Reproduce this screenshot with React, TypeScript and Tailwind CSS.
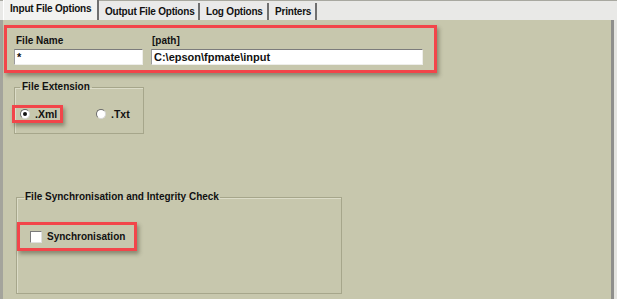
const font = { fontFamily: '"Liberation Sans", Arial, sans-serif' };

const tabs = [
    { name: 'Input File Options', w: 'w-[96px]', active: true },
    { name: 'Output File Options', w: 'w-[101px]', active: false },
    { name: 'Log Options', w: 'w-[69px]', active: false },
    { name: 'Printers', w: 'w-[48px]', active: false },
];

const RedBox = ({ className, children }: { className: string; children: React.ReactNode }) => (
    <div className={`border-[3px] border-[#f2454a] shadow-[2px_3px_4px_rgba(60,60,40,0.45)] ${className}`}>
        {children}
    </div>
);

const App = () => {
    return (
        <div style={font} className="w-[617px] h-[299px] bg-[#e9e9e7] flex flex-col overflow-hidden text-[10px] font-bold text-[#111] leading-[12px]">
            {/* tab strip */}
            <div className="h-[20px] border-t border-[#a8a8a0] flex items-end pl-[3px] bg-[#e9e9e7]">
                {tabs.map((tab) => (
                    <div
                        key={tab.name}
                        className={`${tab.w} flex items-center pl-[6px] border-r-2 border-r-[#6f6f6f] ${tab.active ? 'h-[20px] bg-[#f2f2f0] border-l border-l-white pb-[2px]' : 'h-[17px] bg-[#eaeaea]'}`}
                    >
                        <span className="whitespace-nowrap tracking-[-0.2px]">{tab.name}</span>
                    </div>
                ))}
            </div>

            {/* panel */}
            <div className="flex-1 flex">
                <div className="w-[3px] bg-[#a4a49c]" />
                <div className="flex-1 bg-[#c7c7ad] flex flex-col">
                    <RedBox className="mt-[5px] ml-[1px] w-[433px] h-[48px] pt-[7px] pl-[7px] flex gap-[8px]">
                        <div className="flex flex-col w-[129px]">
                            <span className="pl-[2px] h-[14px]">File Name</span>
                            <div className="h-[16px] bg-white border border-t-[#7c7c7c] border-l-[#9c9c9c] border-b-[#eeeeea] border-r-[#eeeeea] pl-[2px] flex items-center text-[11px]">*</div>
                        </div>
                        <div className="flex flex-col w-[272px]">
                            <span className="pl-[1px] h-[14px]">[path]</span>
                            <div className="h-[16px] bg-white border border-t-[#7c7c7c] border-l-[#9c9c9c] border-b-[#eeeeea] border-r-[#eeeeea] pl-[2px] flex items-center text-[11px]">C:\epson\fpmate\input</div>
                        </div>
                    </RedBox>

                    <fieldset className="mt-[8px] ml-[11px] w-[130px] h-[53px] border border-[#a6a68b] shadow-[inset_1px_1px_0_#dcdcc8]">
                        <legend className="ml-[5px] px-[2px] leading-[12px]">File Extension</legend>
                        <div className="flex items-center mt-[12px] -ml-[3px]">
                            <RedBox className="w-[51px] h-[18px] flex items-center pl-[5px]">
                                <span className="w-[10px] h-[10px] rounded-full bg-white border border-t-[#6a6a6a] border-l-[#6a6a6a] border-b-[#d8d8d8] border-r-[#d8d8d8] flex items-center justify-center">
                                    <span className="w-[4px] h-[4px] rounded-full bg-[#111]" />
                                </span>
                                <span className="ml-[5px] text-[10.5px]">.Xml</span>
                            </RedBox>
                            <span className="ml-[33px] w-[10px] h-[10px] rounded-full bg-white border border-t-[#6a6a6a] border-l-[#6a6a6a] border-b-[#d8d8d8] border-r-[#d8d8d8]" />
                            <span className="ml-[5px] text-[10.5px]">.Txt</span>
                        </div>
                    </fieldset>

                    <fieldset className="mt-[57px] ml-[13px] w-[326px] h-[103px] border border-[#a6a68b] shadow-[inset_1px_1px_0_#dcdcc8]">
                        <legend className="ml-[7px] px-[1px] leading-[12px]">File Synchronisation and Integrity Check</legend>
                        <RedBox className="mt-[19px] ml-[0px] w-[120px] h-[29px] flex items-center pl-[10px]">
                            <span className="w-[12px] h-[12px] bg-white border border-t-[#7a7a7a] border-l-[#7a7a7a] border-b-[#e0e0e0] border-r-[#e0e0e0]" />
                            <span className="ml-[5px]">Synchronisation</span>
                        </RedBox>
                    </fieldset>
                </div>
                <div className="w-[3px] bg-[#8f8f8c]" />
                <div className="w-[3px] bg-[#e4e4e0]" />
            </div>
        </div>
    );
};

export default App;
